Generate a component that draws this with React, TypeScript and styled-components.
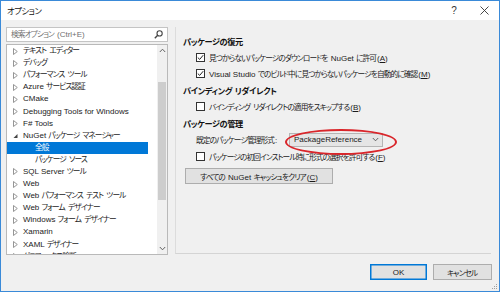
import React from "react";
import styled, { createGlobalStyle } from "styled-components";

const GlobalStyle = createGlobalStyle`
    html, body {
        margin: 0;
        padding: 0;
        background: #ffffff;
    }
    body {
        font-family: "Liberation Sans", "Noto Sans CJK JP", sans-serif;
        font-feature-settings: "palt";
        font-size: 8px;
        color: #1b1b1b;
    }
`;

type TreeItem = {
    label: string;
    level: number;
    state?: "collapsed" | "expanded";
    selected?: boolean;
};

const treeItems: TreeItem[] = [
    { label: "テキスト エディター", level: 0, state: "collapsed" },
    { label: "デバッグ", level: 0, state: "collapsed" },
    { label: "パフォーマンス ツール", level: 0, state: "collapsed" },
    { label: "Azure サービス認証", level: 0, state: "collapsed" },
    { label: "CMake", level: 0, state: "collapsed" },
    { label: "Debugging Tools for Windows", level: 0, state: "collapsed" },
    { label: "F# Tools", level: 0, state: "collapsed" },
    { label: "NuGet パッケージ マネージャー", level: 0, state: "expanded" },
    { label: "全般", level: 1, selected: true },
    { label: "パッケージ ソース", level: 1 },
    { label: "SQL Server ツール", level: 0, state: "collapsed" },
    { label: "Web", level: 0, state: "collapsed" },
    { label: "Web パフォーマンス テスト ツール", level: 0, state: "collapsed" },
    { label: "Web フォーム デザイナー", level: 0, state: "collapsed" },
    { label: "Windows フォーム デザイナー", level: 0, state: "collapsed" },
    { label: "Xamarin", level: 0, state: "collapsed" },
    { label: "XAML デザイナー", level: 0, state: "collapsed" },
    { label: "グラフィックス診断", level: 0, state: "collapsed" },
];

// Japanese runs get a tighter set, like the narrow UI font of the dialog
const cjkRun = /([\u3000-\u30ff\u4e00-\u9fff\uff00-\uffef]+)/;
const jp = (s: string) =>
    s.split(cjkRun).map((part, i) =>
        i % 2 === 1 ? <Jp key={i}>{part}</Jp> : part
    );

const Hotkey: React.FC<{ k: string }> = ({ k }) => (
    <span>(<u>{k}</u>)</span>
);

const CheckBox: React.FC<{ checked?: boolean }> = ({ checked }) => (
    <Box>
        {checked && (
            <svg width="7" height="7" viewBox="0 0 7 7">
                <path d="M0.8 3.6 L2.7 5.4 L6.2 1.2" fill="none" stroke="#222" strokeWidth="1" />
            </svg>
        )}
    </Box>
);

const Arrow: React.FC<{ state?: "collapsed" | "expanded" }> = ({ state }) => (
    <ArrowBox>
        {state === "collapsed" && (
            <svg width="5" height="7" viewBox="0 0 5 7">
                <path d="M0.5 0.5 L4.3 3.5 L0.5 6.5 Z" fill="none" stroke="#8a8a8a" strokeWidth="0.9" />
            </svg>
        )}
        {state === "expanded" && (
            <svg width="5" height="7" viewBox="0 0 5 7">
                <path d="M4.5 2 L4.5 6 L0.5 6 Z" fill="#444" />
            </svg>
        )}
    </ArrowBox>
);

const App: React.FC = () => {
    return (
        <>
            <GlobalStyle />
            <Window>
                <TitleBar>
                    <Title>{jp("オプション")}</Title>
                    <CaptionButton>?</CaptionButton>
                    <CaptionButton>
                        <svg width="9" height="9" viewBox="0 0 9 9">
                            <path d="M0.5 0.5 L8.5 8.5 M8.5 0.5 L0.5 8.5" stroke="#333" strokeWidth="0.9" />
                        </svg>
                    </CaptionButton>
                </TitleBar>
                <Body>
                    <Main>
                        <LeftColumn>
                            <SearchBox>
                                <SearchText>{jp("検索オプション (Ctrl+E)")}</SearchText>
                                <svg width="9" height="9" viewBox="0 0 9 9">
                                    <circle cx="5.6" cy="3.4" r="2.6" fill="none" stroke="#444" strokeWidth="1.1" />
                                    <path d="M3.7 5.3 L0.8 8.2" stroke="#444" strokeWidth="1.4" />
                                </svg>
                            </SearchBox>
                            <Tree>
                                <Rows>
                                    {treeItems.map((item) => (
                                        <Row key={item.label} $level={item.level} $selected={item.selected}>
                                            {item.level === 0 && <Arrow state={item.state} />}
                                            <span>{jp(item.label)}</span>
                                        </Row>
                                    ))}
                                </Rows>
                                <ScrollBar>
                                    <ScrollArrow>
                                        <svg width="7" height="5" viewBox="0 0 7 5">
                                            <path d="M0.8 4 L3.5 1.2 L6.2 4" fill="none" stroke="#606060" strokeWidth="1" />
                                        </svg>
                                    </ScrollArrow>
                                    <Track>
                                        <Thumb />
                                    </Track>
                                    <ScrollArrow>
                                        <svg width="7" height="5" viewBox="0 0 7 5">
                                            <path d="M0.8 1 L3.5 3.8 L6.2 1" fill="none" stroke="#606060" strokeWidth="1" />
                                        </svg>
                                    </ScrollArrow>
                                </ScrollBar>
                            </Tree>
                        </LeftColumn>
                        <RightPanel>
                            <Heading><span>{jp("パッケージの復元")}</span></Heading>
                            <CheckRow>
                                <CheckBox checked />
                                <span>{jp("見つからないパッケージのダウンロードを NuGet に許可")}<Hotkey k="A" /></span>
                            </CheckRow>
                            <CheckRow>
                                <CheckBox checked />
                                <span>{jp("Visual Studio でのビルド中に見つからないパッケージを自動的に確認")}<Hotkey k="M" /></span>
                            </CheckRow>
                            <Heading><span>{jp("バインディング リダイレクト")}</span></Heading>
                            <CheckRow>
                                <CheckBox />
                                <span>{jp("バインディング リダイレクトの適用をスキップする")}<Hotkey k="B" /></span>
                            </CheckRow>
                            <Heading><span>{jp("パッケージの管理")}</span></Heading>
                            <ComboRow>
                                <ComboLabel>{jp("既定のパッケージ管理形式:")}</ComboLabel>
                                <Combo>
                                    <span>PackageReference</span>
                                    <svg width="7" height="5" viewBox="0 0 7 5">
                                        <path d="M0.8 1 L3.5 3.8 L6.2 1" fill="none" stroke="#555" strokeWidth="0.9" />
                                    </svg>
                                    <Highlight />
                                </Combo>
                            </ComboRow>
                            <CheckRow>
                                <CheckBox />
                                <span>{jp("パッケージの初回インストール時に形式の選択を許可する")}<Hotkey k="F" /></span>
                            </CheckRow>
                            <ClearButton>
                                <span>{jp("すべての NuGet キャッシュをクリア")}<Hotkey k="C" /></span>
                            </ClearButton>
                        </RightPanel>
                    </Main>
                    <Footer>
                        <DialogButton $primary>OK</DialogButton>
                        <DialogButton><span>{jp("キャンセル")}</span></DialogButton>
                        <Grip>
                            <svg width="6" height="6" viewBox="0 0 6 6">
                                <rect x="4" y="0" width="1" height="1" fill="#a0a0a0" />
                                <rect x="2" y="2" width="1" height="1" fill="#a0a0a0" />
                                <rect x="4" y="2" width="1" height="1" fill="#a0a0a0" />
                                <rect x="0" y="4" width="1" height="1" fill="#a0a0a0" />
                                <rect x="2" y="4" width="1" height="1" fill="#a0a0a0" />
                                <rect x="4" y="4" width="1" height="1" fill="#a0a0a0" />
                            </svg>
                        </Grip>
                    </Footer>
                </Body>
            </Window>
        </>
    );
};

const Jp = styled.span`
    font-size: 7.7px;
    letter-spacing: -0.9px;
    padding-right: 0.9px;
`;
const Window = styled.div`
    box-sizing: border-box;
    width: 500px;
    height: 292px;
    border: 1px solid #3a8ad8;
    background: #f0f0f0;
    display: flex;
    flex-direction: column;
    overflow: hidden;
`;
const TitleBar = styled.div`
    height: 19px;
    background: #ffffff;
    display: flex;
    align-items: center;
    padding-left: 6px;
`;
const Title = styled.div`
    flex: 1;
    font-size: 8.5px;
    line-height: 12px;
    color: #111;
    ${Jp} {
        font-size: 8.4px;
        letter-spacing: -0.5px;
    }
`;
const CaptionButton = styled.div`
    width: 30px;
    height: 19px;
    display: flex;
    align-items: center;
    justify-content: center;
    font-size: 10px;
    color: #333;
`;
const Body = styled.div`
    flex: 1;
    display: flex;
    flex-direction: column;
    position: relative;
`;
const Main = styled.div`
    display: flex;
    padding: 7px 8px 0 5px;
`;
const LeftColumn = styled.div`
    width: 162px;
    display: flex;
    flex-direction: column;
    gap: 2px;
`;
const SearchBox = styled.div`
    box-sizing: border-box;
    height: 15px;
    background: #ffffff;
    border: 1px solid #c4c4c4;
    display: flex;
    align-items: center;
    padding: 0 4px 0 4px;
`;
const SearchText = styled.div`
    flex: 1;
    color: #707070;
    line-height: 12px;
`;
const Tree = styled.div`
    box-sizing: border-box;
    height: 211px;
    background: #ffffff;
    border: 1px solid #b9b9b9;
    display: flex;
    overflow: hidden;
`;
const Rows = styled.div`
    flex: 1;
    padding-right: 9px;
    overflow: hidden;
`;
const Row = styled.div<{ $level: number; $selected?: boolean }>`
    height: 12.1px;
    display: flex;
    align-items: center;
    white-space: nowrap;
    line-height: 12px;
    padding-left: ${(p) => (p.$level === 0 ? 6 : 28)}px;
    background: ${(p) => (p.$selected ? "#0078d7" : "transparent")};
    color: ${(p) => (p.$selected ? "#ffffff" : "#1b1b1b")};
`;
const ArrowBox = styled.div`
    width: 5px;
    height: 7px;
    margin-right: 5px;
    display: flex;
`;
const ScrollBar = styled.div`
    width: 10px;
    background: #f0f0f0;
    display: flex;
    flex-direction: column;
`;
const ScrollArrow = styled.div`
    height: 11px;
    display: flex;
    align-items: center;
    justify-content: center;
`;
const Track = styled.div`
    flex: 1;
    padding: 26px 1px 0 1px;
`;
const Thumb = styled.div`
    height: 118px;
    background: #cdcdcd;
`;
const RightPanel = styled.div`
    box-sizing: border-box;
    margin-left: 7px;
    width: 316px;
    height: 227px;
    border-left: 1px solid #dcdcdc;
    border-bottom: 1px solid #d4d4d4;
    padding: 5px 0 0 7px;
    display: flex;
    flex-direction: column;
`;
const Heading = styled.div`
    height: 17px;
    display: flex;
    align-items: center;
    font-weight: bold;
    font-size: 8.5px;
    color: #111;
    ${Jp} {
        font-size: 8.2px;
        letter-spacing: -0.4px;
        padding-right: 0.4px;
    }
`;
const CheckRow = styled.div`
    height: 16px;
    display: flex;
    align-items: center;
    gap: 4px;
    padding-left: 13px;
    white-space: nowrap;
`;
const Box = styled.div`
    box-sizing: border-box;
    width: 9px;
    height: 9px;
    border: 1px solid #333;
    background: #ffffff;
    display: flex;
    align-items: center;
    justify-content: center;
`;
const ComboRow = styled.div`
    height: 17px;
    display: flex;
    align-items: center;
    padding-left: 13px;
`;
const ComboLabel = styled.div`
    width: 93px;
    white-space: nowrap;
`;
const Combo = styled.div`
    position: relative;
    box-sizing: border-box;
    width: 94px;
    height: 14px;
    background: #e5e5e5;
    border: 1px solid #b5b5b5;
    display: flex;
    align-items: center;
    justify-content: space-between;
    padding: 0 3px 0 4px;
`;
const Highlight = styled.div`
    position: absolute;
    left: -5px;
    top: -5px;
    width: 108px;
    height: 22px;
    border: 2px solid #d9262b;
    border-radius: 50%;
`;
const ClearButton = styled.div`
    box-sizing: border-box;
    margin-top: 4px;
    margin-left: 2px;
    width: 148px;
    height: 16px;
    background: #e1e1e1;
    border: 1px solid #adadad;
    display: flex;
    align-items: center;
    justify-content: center;
    white-space: nowrap;
`;
const Footer = styled.div`
    display: flex;
    justify-content: flex-end;
    gap: 6px;
    padding: 9px 7px 0 0;
`;
const DialogButton = styled.div<{ $primary?: boolean }>`
    box-sizing: border-box;
    width: ${(p) => (p.$primary ? 57 : 59)}px;
    height: 16px;
    background: #e1e1e1;
    border: 1px solid ${(p) => (p.$primary ? "#0078d7" : "#adadad")};
    box-shadow: ${(p) => (p.$primary ? "inset 0 0 0 0.5px #0078d7" : "none")};
    display: flex;
    align-items: center;
    justify-content: center;
`;
const Grip = styled.div`
    position: absolute;
    right: 1px;
    bottom: 1px;
    width: 6px;
    height: 6px;
    display: flex;
`;

export default App;
